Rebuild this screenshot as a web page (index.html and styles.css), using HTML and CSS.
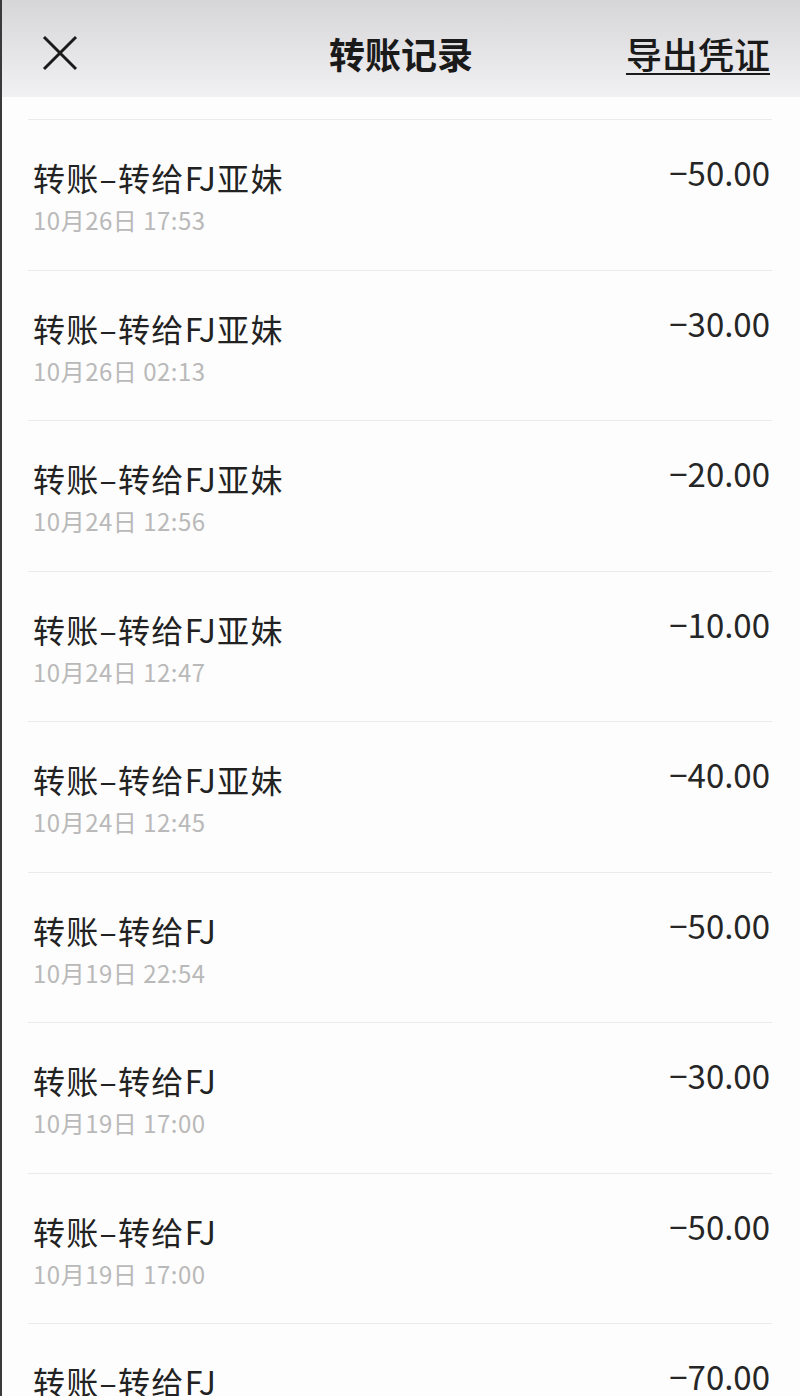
FILE: index.html
```html
<!DOCTYPE html>
<html lang="zh-CN">
<head>
    <meta charset="UTF-8">
    <meta name="viewport" content="width=device-width, initial-scale=1.0">
    <title>转账记录</title>
    <link rel="stylesheet" href="styles.css">
</head>
<body>
    <div class="page">
        <header class="topbar">
            <span class="close">
                <svg width="36" height="36" viewBox="0 0 36 36">
                    <path d="M2 2 L34 34 M34 2 L2 34" stroke="#1a1a1a" stroke-width="3" fill="none"/>
                </svg>
            </span>
            <h1>转账记录</h1>
            <a class="export">导出凭证</a>
        </header>

        <div class="list">
            <div class="row-cut"></div>
            <div class="row">
                <div class="info"><div class="name">转账–转给FJ亚妹</div><div class="time">10月26日 17:53</div></div>
                <div class="amount">−50.00</div>
            </div>
            <div class="row">
                <div class="info"><div class="name">转账–转给FJ亚妹</div><div class="time">10月26日 02:13</div></div>
                <div class="amount">−30.00</div>
            </div>
            <div class="row">
                <div class="info"><div class="name">转账–转给FJ亚妹</div><div class="time">10月24日 12:56</div></div>
                <div class="amount">−20.00</div>
            </div>
            <div class="row">
                <div class="info"><div class="name">转账–转给FJ亚妹</div><div class="time">10月24日 12:47</div></div>
                <div class="amount">−10.00</div>
            </div>
            <div class="row">
                <div class="info"><div class="name">转账–转给FJ亚妹</div><div class="time">10月24日 12:45</div></div>
                <div class="amount">−40.00</div>
            </div>
            <div class="row">
                <div class="info"><div class="name">转账–转给FJ</div><div class="time">10月19日 22:54</div></div>
                <div class="amount">−50.00</div>
            </div>
            <div class="row">
                <div class="info"><div class="name">转账–转给FJ</div><div class="time">10月19日 17:00</div></div>
                <div class="amount">−30.00</div>
            </div>
            <div class="row">
                <div class="info"><div class="name">转账–转给FJ</div><div class="time">10月19日 17:00</div></div>
                <div class="amount">−50.00</div>
            </div>
            <div class="row">
                <div class="info"><div class="name">转账–转给FJ</div><div class="time">10月19日 16:58</div></div>
                <div class="amount">−70.00</div>
            </div>
        </div>
    </div>
</body>
</html>
```

FILE: styles.css
```css
body {
    margin: 0;
    padding: 0;
    background-color: #fdfdfd;
    font-family: "Noto Sans CJK SC", "Noto Sans", sans-serif;
    color: #222;
}
.page {
    height: 1396px;
    overflow: hidden;
    border-left: 2px solid #3a3a3a;
}
.topbar {
    height: 97px;
    display: grid;
    grid-template-columns: 1fr auto 1fr;
    align-items: center;
    padding: 0 30px;
    background: linear-gradient(#d6d5d8, #f1f0f2);
}
.close {
    display: flex;
    width: 36px;
    height: 36px;
    margin: 8px 0 0 10px;
}
.topbar h1 {
    margin: 8px 0 0 0;
    font-size: 36px;
    font-weight: bold;
    color: #1a1a1a;
}
.export {
    justify-self: end;
    margin-top: 8px;
    font-size: 36px;
    font-weight: 500;
    color: #1a1a1a;
    text-decoration: underline;
    text-underline-offset: 4px;
    text-decoration-thickness: 2px;
}
.list {
    padding: 0 28px 0 26px;
}
.row-cut {
    height: 22px;
    border-bottom: 1px solid #ebebeb;
}
.row {
    box-sizing: border-box;
    height: 150.5px;
    display: flex;
    justify-content: space-between;
    align-items: flex-start;
    padding: 38px 2px 0 5px;
    border-bottom: 1px solid #ebebeb;
}
.name {
    font-size: 32px;
    line-height: 38px;
    letter-spacing: 1.3px;
    color: #222;
}
.time {
    margin-top: 9px;
    font-size: 24px;
    line-height: 30px;
    letter-spacing: 0.5px;
    color: #b9b9b9;
}
.amount {
    margin-top: -6px;
    font-size: 33px;
    line-height: 40px;
    color: #262626;
}
```
